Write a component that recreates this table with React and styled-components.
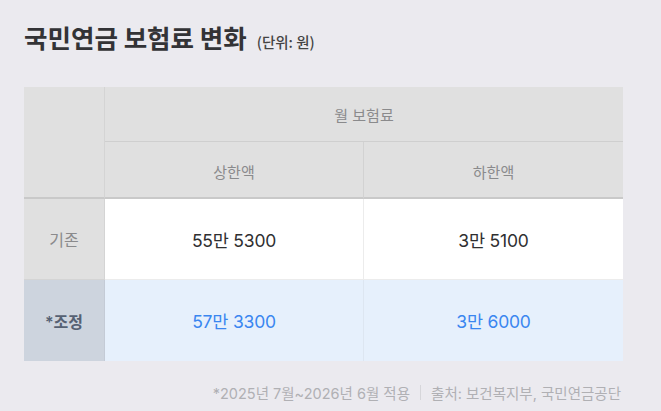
import React from 'react'
import styled, {createGlobalStyle} from 'styled-components'

const GlobalStyle = createGlobalStyle`
    html, body {
        margin: 0;
        padding: 0;
        background: #ebeaef;
        font-family: Inter, "Noto Sans CJK KR", sans-serif;
    }
`

const rows = [
    {label: '기존', upper: '55만 5300', lower: '3만 5100', adjusted: false},
    {label: '*조정', upper: '57만 3300', lower: '3만 6000', adjusted: true},
]

const App = () => {
    return(
        <Page>
            <GlobalStyle />
            <TitleRow>
                <Title>국민연금 보험료 변화</Title>
                <Unit>(단위: 원)</Unit>
            </TitleRow>
            <Table>
                <Corner />
                <GroupHead>월 보험료</GroupHead>
                <SubHead>상한액</SubHead>
                <SubHead last>하한액</SubHead>
                {rows.map(row => (
                    <React.Fragment key={row.label}>
                        <RowHead adjusted={row.adjusted}>{row.label}</RowHead>
                        <Cell adjusted={row.adjusted}>{row.upper}</Cell>
                        <Cell adjusted={row.adjusted} last>{row.lower}</Cell>
                    </React.Fragment>
                ))}
            </Table>
            <Footer>
                <span>*2025년 7월~2026년 6월 적용</span>
                <Divider />
                <span>출처: 보건복지부, 국민연금공단</span>
            </Footer>
        </Page>
    )
}

const Page = styled.div`
    width: 661px;
    height: 411px;
    box-sizing: border-box;
    padding: 20px 38px 0 24px;
    display: flex;
    flex-direction: column;
`

const TitleRow = styled.div`
    display: flex;
    align-items: baseline;
    gap: 10px;
    height: 67px;
`

const Title = styled.h1`
    margin: 0;
    font-family: "Noto Sans CJK KR", sans-serif;
    font-size: 25.5px;
    font-weight: 700;
    color: #333336;
    line-height: 34px;
`

const Unit = styled.span`
    font-family: "Noto Sans CJK KR", sans-serif;
    font-size: 14.5px;
    font-weight: 500;
    color: #444;
`

const Table = styled.div`
    display: grid;
    grid-template-columns: 81px 259px 259px;
    grid-template-rows: 55px 57px 81px 81px;
    width: 599px;
    font-family: Inter, "Noto Sans CJK KR", sans-serif;
`

const Corner = styled.div`
    grid-row: 1 / span 2;
    background: #e0e0e0;
    border-right: 1px solid #d4d4d4;
    border-bottom: 2px solid #c9c9c9;
`

const headText = `
    display: flex;
    align-items: center;
    justify-content: center;
    background: #e0e0e0;
    color: #8a8a8c;
    font-size: 15px;
`

const GroupHead = styled.div`
    ${headText}
    grid-column: 2 / span 2;
    border-bottom: 1px solid #cfcfcf;
`

const SubHead = styled.div`
    ${headText}
    border-bottom: 2px solid #c9c9c9;
    border-right: ${p => p.last ? 'none' : '1px solid #d2d2d2'};
    padding-top: 4px;
`

const RowHead = styled.div`
    display: flex;
    align-items: center;
    justify-content: center;
    font-size: 16px;
    background: ${p => p.adjusted ? '#cdd4de' : '#e0e0e0'};
    color: ${p => p.adjusted ? '#566173' : '#8a8a8c'};
    font-weight: ${p => p.adjusted ? 600 : 400};
    border-right: 1px solid ${p => p.adjusted ? '#c4cbd6' : '#d4d4d4'};
    border-bottom: ${p => p.adjusted ? 'none' : '1px solid #d4d4d4'};
`

const Cell = styled.div`
    display: flex;
    align-items: center;
    justify-content: center;
    font-size: 17.5px;
    letter-spacing: -0.2px;
    background: ${p => p.adjusted ? '#e6f0fc' : '#ffffff'};
    color: ${p => p.adjusted ? '#3a86f0' : '#2f2f31'};
    border-right: ${p => p.last ? 'none' : `1px solid ${p.adjusted ? '#dde6f1' : '#ececec'}`};
    border-bottom: ${p => p.adjusted ? 'none' : '1px solid #ececec'};
`

const Footer = styled.div`
    display: flex;
    justify-content: flex-end;
    align-items: center;
    gap: 10px;
    margin-top: 21px;
    padding-right: 2px;
    font-family: Inter, "Noto Sans CJK KR", sans-serif;
    font-size: 14.5px;
    color: #b0b0b4;
`

const Divider = styled.i`
    width: 1px;
    height: 15px;
    background: #d6d6da;
`

export default App
